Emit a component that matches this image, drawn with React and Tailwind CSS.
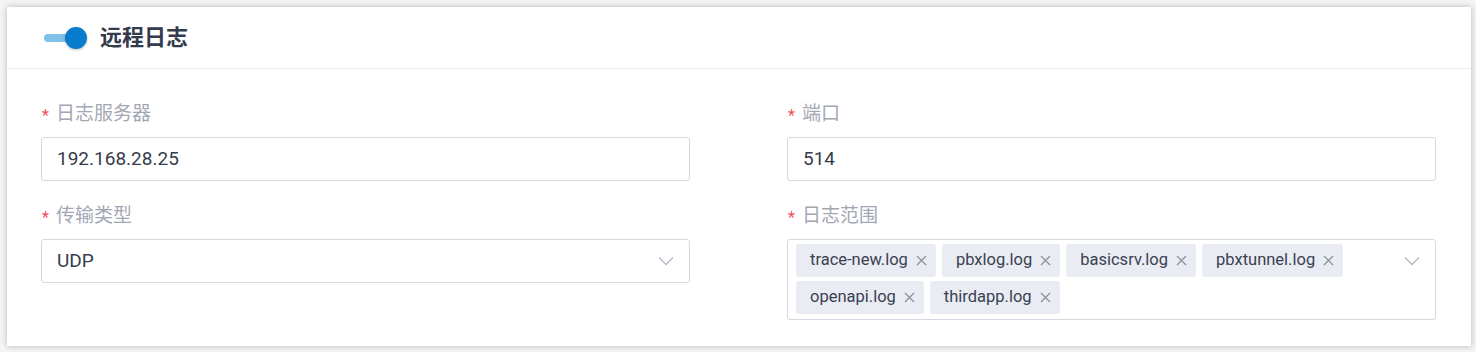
import React from "react";

const tags = [
  ["trace-new.log", "pbxlog.log", "basicsrv.log", "pbxtunnel.log"],
  ["openapi.log", "thirdapp.log"],
];

function Chevron() {
  return (
    <svg width="16" height="10" viewBox="0 0 16 10" className="shrink-0">
      <path d="M1 1.5 L8 8.5 L15 1.5" fill="none" stroke="#b4b8c2" strokeWidth="1.3" />
    </svg>
  );
}

function Close() {
  return (
    <svg width="11" height="11" viewBox="0 0 11 11" className="ml-2">
      <path d="M1 1 L10 10 M10 1 L1 10" stroke="#8a8f9a" strokeWidth="1.2" />
    </svg>
  );
}

function Label({ text }) {
  return (
    <div className="flex items-center h-[26px] mt-[1px] mb-[10px] text-[19px] text-[#a3a7b4]">
      <span className="text-[#f0505a] ml-[1px] mr-[7px] text-[16px] leading-none mt-[3px]">*</span>
      {text}
    </div>
  );
}

function Input({ value, select }) {
  return (
    <div className="h-[44px] border border-[#d5d8df] rounded-[3px] flex items-center justify-between pl-[15px] pr-[15px] text-[19px] text-[#363c4c]">
      <span>{value}</span>
      {select && <Chevron />}
    </div>
  );
}

export default function App() {
  return (
    <div className="w-[1476px] h-[352px] bg-[#f4f4f5] pl-[7px] pr-[5px] pt-[7px] pb-[6px]" style={{ fontFamily: "Roboto, 'Noto Sans CJK SC', sans-serif" }}>
      <div className="bg-white h-full shadow-[0_0_6px_rgba(0,0,0,0.25)]">
        <div className="h-[62px] border-b border-[#ececef] flex items-center pl-[37px]">
          <div className="relative w-[43px] h-[22px] flex items-center">
            <div className="w-[35px] h-[8px] rounded-full bg-[#7fc1e8]"></div>
            <div className="absolute right-0 top-0 w-[22px] h-[22px] rounded-full bg-[#0a7ccd] shadow-[0_1px_3px_rgba(0,0,0,0.25)]"></div>
          </div>
          <div className="ml-[13px] text-[22px] font-bold text-[#343b4c]">远程日志</div>
        </div>
        <div className="grid grid-cols-2 gap-x-[97px] pl-[34px] pr-[35px] pt-[31px]">
          <div>
            <Label text="日志服务器" />
            <Input value="192.168.28.25" />
          </div>
          <div>
            <Label text="端口" />
            <Input value="514" />
          </div>
          <div className="mt-[21px]">
            <Label text="传输类型" />
            <Input value="UDP" select />
          </div>
          <div className="mt-[21px]">
            <Label text="日志范围" />
            <div className="border border-[#d5d8df] rounded-[3px] flex justify-between pl-[8px] pr-[15px] pt-[4px] pb-[5px]">
              <div className="flex flex-col gap-[4px]">
                {tags.map((row, i) => (
                  <div key={i} className="flex gap-[6px]">
                    {row.map((t) => (
                      <div key={t} className="h-[33px] bg-[#e9ecf2] rounded-[3px] flex items-center pl-[14px] pr-[9px] text-[16.5px] text-[#3a4153]">
                        {t}
                        <Close />
                      </div>
                    ))}
                  </div>
                ))}
              </div>
              <div className="h-[33px] flex items-center">
                <Chevron />
              </div>
            </div>
          </div>
        </div>
      </div>
    </div>
  );
}
